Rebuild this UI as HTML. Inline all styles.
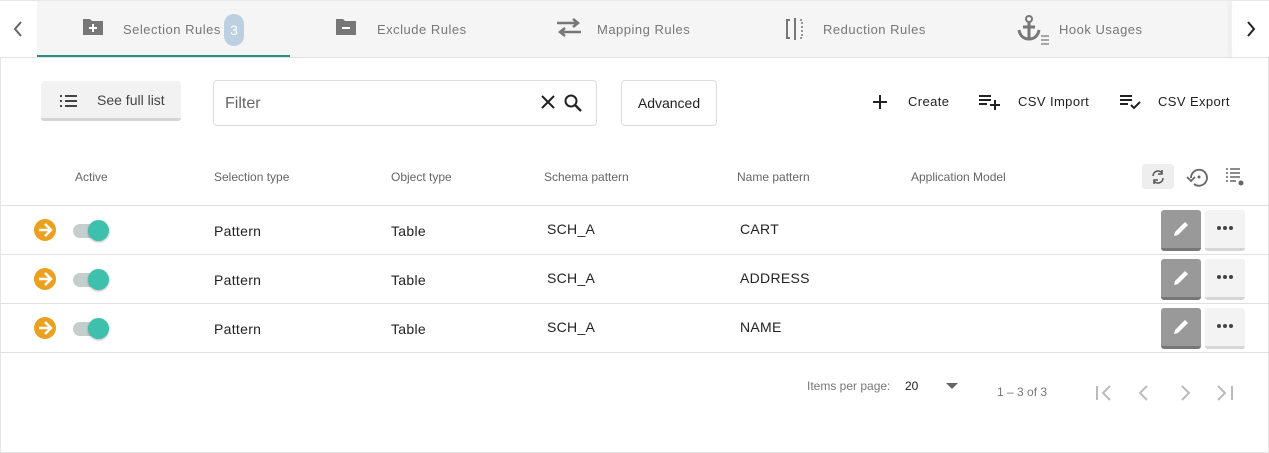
<!DOCTYPE html>
<html><head><meta charset="utf-8"><style>
*{box-sizing:border-box;margin:0;padding:0}
body{width:1269px;height:453px;overflow:hidden;background:#fff;font-family:"Liberation Sans",Roboto,sans-serif;position:relative;color:#222}
.a{position:absolute}
.tabs{left:0;top:0;width:1269px;height:58px;border-bottom:1px solid #e0e0e0;border-top:1px solid #e8e8e8;background:#fff}
.tabbg{left:37px;top:1px;width:1195px;height:56px;background:#f5f5f5}
.tab{top:22px;font-size:13px;color:#777;letter-spacing:.5px}
.hd{top:170px;font-size:12px;color:#666}
.cell{font-size:14px;color:#222;letter-spacing:.3px}
.line{left:0;width:1269px;height:1px;background:#e0e0e0}
.btnE{width:40px;height:41px;background:#999;border-radius:3px;border-bottom:3px solid #777}
.btnM{width:40px;height:41px;background:#f3f3f3;border-radius:3px;border-bottom:3px solid #d6d6d6}
</style></head><body>
<div class="a" style="left:0;top:0;width:1px;height:453px;background:#e6e6e6"></div>
<div class="a" style="right:0;top:0;width:1px;height:453px;background:#e6e6e6"></div>
<div class="a" style="left:0;bottom:0;width:1269px;height:1px;background:#e6e6e6"></div>
<div class="a tabs"></div>
<div class="a tabbg"></div>
<svg class="a" style="left:10px;top:20px" width="16" height="18" viewBox="0 0 16 18"><path d="M11 2 L5 9 L11 16" fill="none" stroke="#666" stroke-width="2"/></svg>
<svg class="a" style="left:1243px;top:20px" width="16" height="18" viewBox="0 0 16 18"><path d="M5 2 L11 9 L5 16" fill="none" stroke="#222" stroke-width="2"/></svg>
<div class="a" style="left:1232px;top:1px;width:1px;height:56px;box-shadow:-2px 0 4px rgba(0,0,0,.15)"></div>
<svg class="a" style="left:82px;top:17px" width="22" height="20" viewBox="0 0 22 20"><path d="M1 2h7l2 2h11v14H1z" fill="#777"/><path d="M11 7v8M7 11h8" stroke="#fff" stroke-width="2"/></svg>
<div class="a tab" style="left:123px">Selection Rules</div>
<div class="a" style="left:224px;top:14px;width:20px;height:32px;border-radius:10px;background:#bcd0e2;color:#fff;font-size:14px;text-align:center;line-height:32px">3</div>
<div class="a" style="left:37px;top:55px;width:253px;height:2px;background:#26917f"></div>
<svg class="a" style="left:335px;top:17px" width="22" height="20" viewBox="0 0 22 20"><path d="M1 2h7l2 2h11v14H1z" fill="#777"/><path d="M7 11h8" stroke="#fff" stroke-width="2"/></svg>
<div class="a tab" style="left:377px">Exclude Rules</div>
<svg class="a" style="left:556px;top:18px" width="26" height="20" viewBox="0 0 26 20"><path d="M1 5h20M17 1l5 4-5 4M25 14H5M9 10l-5 4 5 4" fill="none" stroke="#777" stroke-width="2.5"/></svg>
<div class="a tab" style="left:597px">Mapping Rules</div>
<svg class="a" style="left:785px;top:18px" width="20" height="22" viewBox="0 0 20 22"><path d="M5 2H2v18h3M10 0v22" fill="none" stroke="#777" stroke-width="2"/><path d="M15 2h2v18h-2" fill="none" stroke="#777" stroke-width="1.5" stroke-dasharray="2 2"/></svg>
<div class="a tab" style="left:823px">Reduction Rules</div>
<svg class="a" style="left:1017px;top:14px" width="34" height="32" viewBox="0 0 34 32"><circle cx="12" cy="5" r="3" fill="none" stroke="#777" stroke-width="2"/><path d="M12 8v17M2 16c1 6 5 9 10 9s9-3 10-9M6 13h12" fill="none" stroke="#777" stroke-width="3"/><path d="M24 22h8M24 26h8M24 30h8" stroke="#777" stroke-width="1.2"/></svg>
<div class="a tab" style="left:1059px">Hook Usages</div>
<div class="a" style="left:41px;top:81px;width:140px;height:40px;background:#f2f2f2;border-radius:3px;border-bottom:3px solid #d4d4d4"></div>
<svg class="a" style="left:59px;top:94px" width="20" height="14" viewBox="0 0 20 14"><path d="M1 2h2M6 2h12M1 7h2M6 7h12M1 12h2M6 12h12" stroke="#444" stroke-width="2"/></svg>
<div class="a" style="left:97px;top:92px;font-size:14px;color:#444">See full list</div>
<div class="a" style="left:213px;top:80px;width:384px;height:46px;border:1px solid #ddd;border-radius:4px"></div>
<div class="a" style="left:225px;top:95px;font-size:16px;color:#666">Filter</div>
<svg class="a" style="left:540px;top:94px" width="16" height="16" viewBox="0 0 16 16"><path d="M2 2l12 12M14 2L2 14" stroke="#222" stroke-width="2"/></svg>
<svg class="a" style="left:563px;top:93px" width="20" height="20" viewBox="0 0 20 20"><circle cx="8" cy="8" r="5.5" fill="none" stroke="#222" stroke-width="2"/><path d="M12 12l6 6" stroke="#222" stroke-width="2.3"/></svg>
<div class="a" style="left:621px;top:80px;width:96px;height:46px;border:1px solid #ddd;border-radius:4px;font-size:14px;line-height:44px;text-align:center;color:#222">Advanced</div>
<svg class="a" style="left:872px;top:94px" width="16" height="16" viewBox="0 0 16 16"><path d="M8 1v14M1 8h14" stroke="#222" stroke-width="2"/></svg>
<div class="a" style="left:908px;top:94px;font-size:13px;color:#222;letter-spacing:.4px">Create</div>
<svg class="a" style="left:979px;top:94px" width="22" height="16" viewBox="0 0 22 16"><path d="M0 2h12M0 6h12M0 10h8M16 6v10M11 11h10" stroke="#222" stroke-width="2"/></svg>
<div class="a" style="left:1018px;top:94px;font-size:13px;color:#222;letter-spacing:.4px">CSV Import</div>
<svg class="a" style="left:1120px;top:94px" width="22" height="16" viewBox="0 0 22 16"><path d="M0 2h12M0 6h12M0 10h8M11 11l3 3 6-6" fill="none" stroke="#222" stroke-width="2"/></svg>
<div class="a" style="left:1158px;top:94px;font-size:13px;color:#222;letter-spacing:.4px">CSV Export</div>
<div class="a hd" style="left:75px">Active</div>
<div class="a hd" style="left:214px">Selection type</div>
<div class="a hd" style="left:391px">Object type</div>
<div class="a hd" style="left:544px">Schema pattern</div>
<div class="a hd" style="left:737px">Name pattern</div>
<div class="a hd" style="left:911px">Application Model</div>
<div class="a" style="left:1142px;top:164px;width:32px;height:25px;background:#eee;border-radius:3px"></div>
<svg class="a" style="left:1150px;top:169px" width="16" height="16" viewBox="0 0 16 16"><path d="M3 7a5 5 0 0 1 9-3M13 9a5 5 0 0 1-9 3" fill="none" stroke="#555" stroke-width="1.5"/><path d="M12 1v4H8M4 15v-4h4" fill="none" stroke="#555" stroke-width="1.5"/></svg>
<svg class="a" style="left:1186px;top:166px" width="24" height="22" viewBox="0 0 24 22"><path d="M5 12a8 8 0 1 1 3 6" fill="none" stroke="#666" stroke-width="1.8"/><path d="M1 11l4 4 4-4" fill="none" stroke="#666" stroke-width="1.8"/><circle cx="13" cy="11" r="1.5" fill="#666"/></svg>
<svg class="a" style="left:1225px;top:167px" width="20" height="20" viewBox="0 0 20 20"><path d="M1 2h2M5 2h10M1 6h2M5 6h10M1 10h2M5 10h10M1 14h2M5 14h6" stroke="#666" stroke-width="1.5"/><circle cx="16" cy="16" r="2.5" fill="#666"/></svg>
<div class="a line" style="top:205px"></div>
<div class="a line" style="top:254px"></div>
<div class="a line" style="top:303px"></div>
<div class="a line" style="top:352px"></div>
<div id="rows"></div>
<div class="a" style="left:807px;top:379px;font-size:12px;color:#777">Items per page:</div>
<div class="a" style="left:905px;top:379px;font-size:12px;color:#222">20</div>
<svg class="a" style="left:946px;top:383px" width="12" height="7"><path d="M0 0h12L6 6z" fill="#666"/></svg>
<div class="a" style="left:997px;top:385px;font-size:12px;color:#777">1 – 3 of 3</div>
<svg class="a" style="left:1095px;top:384px" width="150" height="18" viewBox="0 0 150 18"><g fill="none" stroke="#bbb" stroke-width="2"><path d="M2 2v14M15 2l-7 7 7 7M52 2l-7 7 7 7M87 2l7 7-7 7M123 2l7 7-7 7M137 2v14"/></g></svg>
<script>
const d=[["CART",205],["ADDRESS",254],["NAME",303]];
let h="";
d.forEach(([n,t])=>{
h+=`<svg class="a" style="left:33px;top:${t+13}px" width="24" height="24" viewBox="0 0 24 24"><circle cx="12" cy="12" r="11" fill="#eaa020"/><path d="M6 12h11M12 6l6 6-6 6" fill="none" stroke="#fff" stroke-width="2.5"/></svg>
<div class="a" style="left:73px;top:${t+19}px;width:30px;height:14px;border-radius:7px;background:#c4cecc"></div>
<div class="a" style="left:88px;top:${t+15}px;width:21px;height:21px;border-radius:50%;background:#3dc1ad;box-shadow:0 1px 2px rgba(0,0,0,.3)"></div>
<div class="a cell" style="left:214px;top:${t+18}px">Pattern</div>
<div class="a cell" style="left:391px;top:${t+18}px">Table</div>
<div class="a cell" style="left:547px;top:${t+16}px">SCH_A</div>
<div class="a cell" style="left:740px;top:${t+16}px">${n}</div>
<div class="a btnE" style="left:1161px;top:${t+5}px"></div>
<svg class="a" style="left:1171px;top:${t+14}px" width="20" height="20" viewBox="0 0 20 20"><path d="M3 17l1-4L14 3l3 3L7 16z" fill="#fff"/></svg>
<div class="a btnM" style="left:1205px;top:${t+5}px"></div>
<svg class="a" style="left:1216px;top:${t+20}px" width="18" height="6"><circle cx="3" cy="3" r="2" fill="#444"/><circle cx="9" cy="3" r="2" fill="#444"/><circle cx="15" cy="3" r="2" fill="#444"/></svg>`;
});
document.getElementById("rows").innerHTML=h;
</script>
</body></html>
